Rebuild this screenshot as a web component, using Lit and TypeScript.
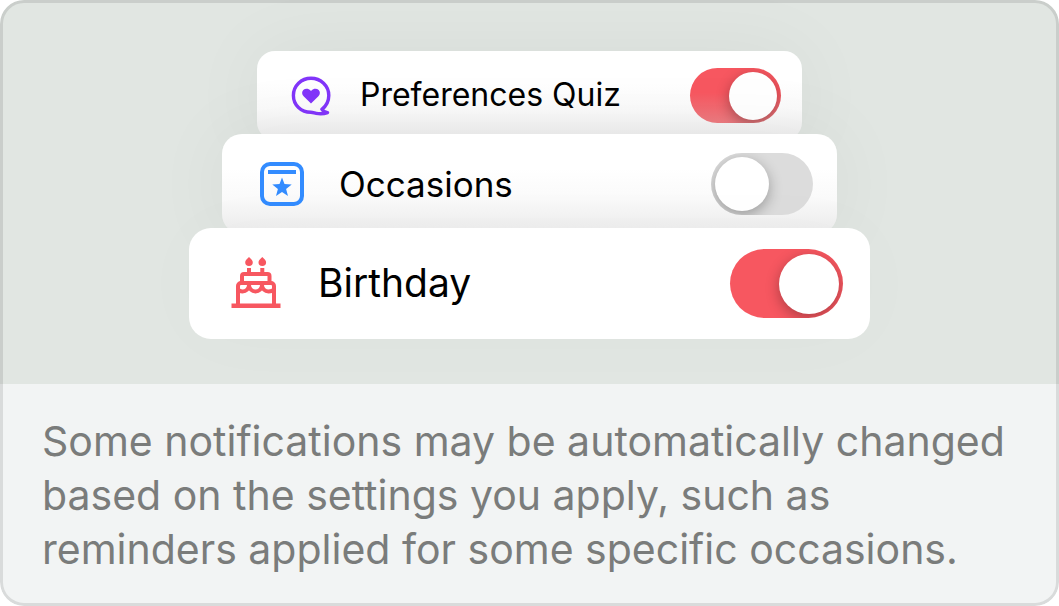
import { LitElement, html, css, svg } from "lit";
import { customElement, property } from "lit/decorators.js";

const quizIcon = svg`
  <svg class="icon" viewBox="0 0 40 40" fill="none" aria-hidden="true">
    <path d="M20 2.200C10.200 2.200 2.400 9.800 2.400 19.500s7.800 16.800 17.300 16.800c2.200 0 3.500.7 5.500 1.100 3.800.7 7.800.5 11.300-.8-2.400-.4-4.600-1.400-5.600-3.300 4.300-3.400 6.900-8.300 6.900-13.900C37.800 9.800 29.800 2.200 20 2.200Z" stroke="#8235fa" stroke-width="3.400" stroke-linejoin="round"/>
    <path d="M20 27.500 12.600 20.300C10.700 18.400 10.600 15.600 12.300 14c2-1.900 5.300-1.700 7.200.5l.5.6.5-.6c1.900-2.200 5.200-2.400 7.200-.5 1.700 1.600 1.600 4.400-.3 6.300Z" fill="#8235fa"/>
  </svg>`;

const occasionIcon = svg`
  <svg class="icon" viewBox="0 0 44 44" fill="none" aria-hidden="true">
    <rect x="2" y="2" width="40" height="40" rx="8" stroke="#338cff" stroke-width="4"/>
    <path d="M8 8h28v4H8Z" fill="#338cff"/>
    <path d="m22 15.500 2.500 6.500 7.200.4-5.600 4.500 1.900 7-6-3.900-6 3.900 1.900-7-5.600-4.500 7.200-.4Z" fill="#338cff"/>
  </svg>`;

const cakeIcon = svg`
  <svg class="icon" viewBox="0 0 50 53" fill="none" aria-hidden="true">
    <path d="M18 0c2.200 2 3.800 3.500 3.800 5.200a3.800 3.800 0 0 1-7.600 0C14.200 3.500 15.800 2 18 0ZM31.300 0c2.200 2 3.800 3.500 3.800 5.200a3.800 3.800 0 0 1-7.600 0C27.500 3.500 29.100 2 31.300 0Z" fill="#f75760"/>
    <path d="M18 11v6M31.300 11v6" stroke="#f75760" stroke-width="4"/>
    <path d="M11 26v-7a2 2 0 0 1 2-2h23.500a2 2 0 0 1 2 2v7" stroke="#f75760" stroke-width="4"/>
    <path d="M7 48V29a3 3 0 0 1 3-3h30a3 3 0 0 1 3 3v19" stroke="#f75760" stroke-width="4"/>
    <path d="M6.500 32c1.500 1.900 3 2.500 5 2.500a6.500 6.500 0 0 0 6.500-6.500a6.500 6.500 0 0 0 13 0a6.500 6.500 0 0 0 6.500 6.500c2 0 4.500-.6 6-2.500" stroke="#f75760" stroke-width="4"/>
    <path d="M.5 46.500h49V51H.5Z" fill="#f75760"/>
  </svg>`;

@customElement("setting-row")
export class SettingRow extends LitElement {
  @property() label = "";
  @property({ type: Boolean }) on = false;
  @property({ attribute: false }) icon: unknown = null;

  static styles = css`
    :host {
      display: block;
      box-sizing: border-box;
      position: relative;
      width: 100%;
      background: #fff;
      box-shadow: 0 0 80px rgba(0, 0, 0, 0.05);
      --knob-gap: 4px;
      --on: #f75760;
    }
    :host(.front) {
      max-width: 681px;
      border-radius: 22px;
      box-shadow: 0 0 80px rgba(0, 0, 0, 0.02);
      --row: 111px;
      --start: 42px;
      --end: 27px;
      --icon: 50px;
      --gap: 37px;
      --text: 39px;
      --track: 113px;
      --knob: 60px;
      --track-h: 69px;
    }
    :host(.middle) {
      max-width: 615px;
      border-radius: 20px;
      --row: 100px;
      --start: 38px;
      --end: 24px;
      --icon: 44px;
      --gap: 35px;
      --text: 35px;
      --track: 102px;
      --knob: 54px;
      --track-h: 62px;
    }
    :host(.back) {
      max-width: 545px;
      border-radius: 18px;
      --row: 89px;
      --start: 34px;
      --end: 21px;
      --icon: 40px;
      --gap: 29px;
      --text: 32px;
      --track: 91px;
      --knob: 48px;
      --track-h: 55px;
      --on: linear-gradient(#f75760 45%, #ec7b80);
    }
    :host(.middle),
    :host(.back) {
      background: linear-gradient(#fff 35%, #fafafa 65%, #ededed 95%);
    }
    .row {
      display: flex;
      align-items: center;
      gap: var(--gap);
      min-height: var(--row);
      padding: 0 var(--end) 0 var(--start);
    }
    .icon {
      display: block;
      flex: none;
      width: var(--icon);
    }
    .label {
      flex: 1;
      font-size: var(--text);
      line-height: 1.2;
      color: #000;
    }
    .switch {
      appearance: none;
      flex: none;
      display: flex;
      align-items: center;
      box-sizing: border-box;
      width: var(--track);
      height: var(--track-h);
      margin: 0;
      padding: 0 var(--knob-gap);
      border-radius: 999px;
      background: #dcdcdc;
      overflow: hidden;
      cursor: pointer;
    }
    .switch::before {
      content: "";
      width: var(--knob);
      height: var(--knob);
      border-radius: 50%;
      background: #fff;
      box-shadow: 0 4px 14px rgba(0, 0, 0, 0.3);
    }
    .switch:checked {
      justify-content: flex-end;
      background: var(--on);
    }
  `;

  render() {
    return html`
      <div class="row">
        ${this.icon}
        <label class="label" for="toggle">${this.label}</label>
        <input class="switch" id="toggle" type="checkbox" role="switch" .checked=${this.on} />
      </div>
    `;
  }
}

@customElement("app-root")
export class AppRoot extends LitElement {
  static styles = css`
    :host {
      display: block;
      font-family: Inter, "Liberation Sans", sans-serif;
    }
    .card {
      position: relative;
      box-sizing: border-box;
      display: flex;
      flex-direction: column;
      min-height: 100vh;
      border-radius: 24px;
      overflow: hidden;
      background: #f2f4f4;
    }
    .card::after {
      content: "";
      position: absolute;
      inset: 0;
      border: 3px solid rgba(0, 0, 0, 0.1);
      border-radius: inherit;
      pointer-events: none;
    }
    .stage {
      display: flex;
      flex-direction: column;
      align-items: center;
      padding: 51px 24px 45px;
      background: #e1e6e2;
      overflow: hidden;
    }
    .middle,
    .front {
      margin-top: -6px;
    }
    .note {
      margin: 0;
      padding: 30px 42px;
      font-size: 41px;
      line-height: 54px;
      color: #7a7c7b;
    }
  `;

  render() {
    return html`
      <section class="card">
        <div class="stage">
          <setting-row class="back" label="Preferences Quiz" .icon=${quizIcon} on></setting-row>
          <setting-row class="middle" label="Occasions" .icon=${occasionIcon}></setting-row>
          <setting-row class="front" label="Birthday" .icon=${cakeIcon} on></setting-row>
        </div>
        <p class="note">
          Some notifications may be automatically changed based on the settings you apply, such as
          reminders applied for some specific occasions.
        </p>
      </section>
    `;
  }
}
